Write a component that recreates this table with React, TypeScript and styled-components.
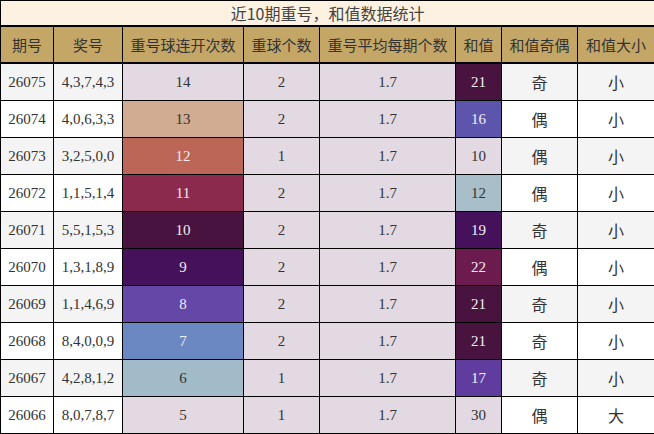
import styled, { createGlobalStyle } from "styled-components";

const GlobalStyle = createGlobalStyle`
    html, body {
        margin: 0;
        padding: 0;
        background: #ffffff;
    }
`;

const TableEl = styled.table`
    width: 654px;
    border-collapse: collapse;
    table-layout: fixed;
    font-family: "Liberation Serif", "Noto Sans CJK SC", serif;
    color: #333333;
`;

const TitleCell = styled.th`
    height: 24px;
    padding: 0;
    background-color: #fdf1e2;
    border: 1px solid #000;
    border-bottom: 2px solid #000;
    font-family: "Noto Sans CJK SC", sans-serif;
    font-weight: normal;
    font-size: 16px;
    color: #444444;
    text-align: center;
`;

const HeadCell = styled.th`
    height: 35px;
    padding: 0;
    background-color: #c4a767;
    border: 1px solid #000;
    border-bottom: 2px solid #000;
    font-family: "Noto Sans CJK SC", sans-serif;
    font-weight: normal;
    font-size: 15px;
    color: #333333;
    text-align: center;
    white-space: nowrap;
`;

const Cell = styled.td<{ $bg?: string; $light?: boolean; $cjk?: boolean }>`
    height: 36px;
    padding: 0;
    border: 1px solid #000;
    text-align: center;
    font-size: ${(props) => (props.$cjk ? "16px" : "15px")};
    font-family: ${(props) =>
        props.$cjk
            ? '"Noto Sans CJK SC", sans-serif'
            : '"Liberation Serif", serif'};
    background-color: ${(props) => props.$bg ?? "#ffffff"};
    color: ${(props) => (props.$light ? "#f2eef2" : "#333333")};
`;

const LAV = "#e2d9e2";

// twilight-ish heat colours: [background, light text]
const heat: Record<string, [string, boolean]> = {
    "14": [LAV, false],
    "13": ["#d1ac93", false],
    "12": ["#bb6656", true],
    "11": ["#8c2a4e", true],
    "10": ["#48133e", true],
    "9": ["#45115a", true],
    "8": ["#6447a7", true],
    "7": ["#6b88c2", true],
    "6": ["#a1bbc9", false],
    "5": [LAV, false],
};

const sumHeat: Record<string, [string, boolean]> = {
    "21": ["#48133e", true],
    "16": ["#5d55ab", true],
    "10": [LAV, false],
    "12": ["#a8bfca", false],
    "19": ["#44115a", true],
    "22": ["#6c1b4f", true],
    "17": ["#5f3c9e", true],
    "30": [LAV, false],
};

interface RowInterface {
    issue: string;
    nums: string;
    streak: string;
    repeat: number;
    sum: string;
    parity: string;
    size: string;
}

const rows: RowInterface[] = [
    { issue: "26075", nums: "4,3,7,4,3", streak: "14", repeat: 2, sum: "21", parity: "奇", size: "小" },
    { issue: "26074", nums: "4,0,6,3,3", streak: "13", repeat: 2, sum: "16", parity: "偶", size: "小" },
    { issue: "26073", nums: "3,2,5,0,0", streak: "12", repeat: 1, sum: "10", parity: "偶", size: "小" },
    { issue: "26072", nums: "1,1,5,1,4", streak: "11", repeat: 2, sum: "12", parity: "偶", size: "小" },
    { issue: "26071", nums: "5,5,1,5,3", streak: "10", repeat: 2, sum: "19", parity: "奇", size: "小" },
    { issue: "26070", nums: "1,3,1,8,9", streak: "9", repeat: 2, sum: "22", parity: "偶", size: "小" },
    { issue: "26069", nums: "1,1,4,6,9", streak: "8", repeat: 2, sum: "21", parity: "奇", size: "小" },
    { issue: "26068", nums: "8,4,0,0,9", streak: "7", repeat: 2, sum: "21", parity: "奇", size: "小" },
    { issue: "26067", nums: "4,2,8,1,2", streak: "6", repeat: 1, sum: "17", parity: "奇", size: "小" },
    { issue: "26066", nums: "8,0,7,8,7", streak: "5", repeat: 1, sum: "30", parity: "偶", size: "大" },
];

const widths = [53, 69, 121, 76, 136, 46, 76, 77];
const heads = ["期号", "奖号", "重号球连开次数", "重球个数", "重号平均每期个数", "和值", "和值奇偶", "和值大小"];

export default function App() {
    return (
        <>
            <GlobalStyle />
            <TableEl>
                <colgroup>
                    {widths.map((w, i) => (
                        <col key={i} style={{ width: w }} />
                    ))}
                </colgroup>
                <thead>
                    <tr>
                        <TitleCell colSpan={8}>近10期重号，和值数据统计</TitleCell>
                    </tr>
                    <tr>
                        {heads.map((h) => (
                            <HeadCell key={h}>{h}</HeadCell>
                        ))}
                    </tr>
                </thead>
                <tbody>
                    {rows.map((r, i) => {
                        const stripe = i % 2 === 0 ? "#f4f4f4" : "#ffffff";
                        const [sbg, slight] = heat[r.streak];
                        const [hbg, hlight] = sumHeat[r.sum];
                        return (
                            <tr key={r.issue}>
                                <Cell $bg={stripe}>{r.issue}</Cell>
                                <Cell $bg={stripe}>{r.nums}</Cell>
                                <Cell $bg={sbg} $light={slight}>{r.streak}</Cell>
                                <Cell $bg={LAV}>{r.repeat}</Cell>
                                <Cell $bg={LAV}>1.7</Cell>
                                <Cell $bg={hbg} $light={hlight}>{r.sum}</Cell>
                                <Cell $bg={stripe} $cjk>{r.parity}</Cell>
                                <Cell $bg={stripe} $cjk>{r.size}</Cell>
                            </tr>
                        );
                    })}
                </tbody>
            </TableEl>
        </>
    );
}
